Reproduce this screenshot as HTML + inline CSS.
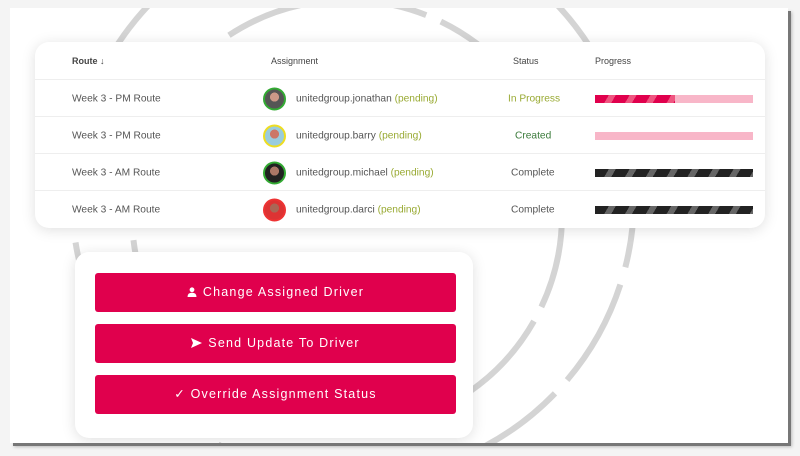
<!DOCTYPE html>
<html><head><style>
body{margin:0;width:800px;height:456px;background:#f4f4f4;position:relative;overflow:hidden;font-family:"Liberation Sans",sans-serif}
.frame{position:absolute;left:10px;top:8px;width:778px;height:435px;background:#fff;box-shadow:3px 3px 0 #777,4px 4px 3px #bbb;overflow:hidden}
svg.bg{position:absolute;left:0;top:0}
.card{position:absolute;background:#fff;border-radius:14px;box-shadow:0 2px 14px rgba(0,0,0,.13)}
.t{left:25px;top:34px;width:730px;height:186px}
.row{position:absolute;left:0;width:730px;height:37px;border-top:1px solid #eee;font-size:10.2px;color:#555}
.row>*{position:absolute;top:50%;transform:translateY(-50%)}
.hd{font-size:9px;color:#444;border:none}
.av{width:19px;height:19px;border-radius:50%;border:2px solid #3a3;left:228px;background:radial-gradient(circle at 50% 40%,#c98 0 30%,#555 31%)}
.bar{left:560px;width:158px;height:8px;background:#f8b6c8}
.pg{color:#9a3;}
.b{position:absolute;left:20px;width:361px;height:39px;background:#e0004d;border-radius:3px;color:#fff;font-size:12.5px;letter-spacing:1.2px;text-align:center;line-height:39px}
</style></head><body>
<div class="frame">
<svg class="bg" width="778" height="435">
<circle cx="337" cy="207" r="215" fill="none" stroke="#d4d4d4" stroke-width="6" stroke-dasharray="95 16"/>
<circle cx="343" cy="190" r="281" fill="none" stroke="#d4d4d4" stroke-width="6" stroke-dasharray="110 18" stroke-dashoffset="40"/>
</svg>
<div class="card t">
<div class="row hd" style="top:0;height:37px"><b style="left:37px">Route ↓</b><span style="left:236px">Assignment</span><span style="left:478px">Status</span><span style="left:560px">Progress</span></div>
<div class="row" style="top:37px"><span style="left:37px">Week 3 - PM Route</span><div class="av"></div><span style="left:261px">unitedgroup.jonathan <span class="pg">(pending)</span></span><span style="left:473px;color:#9a3">In Progress</span><div class="bar"><div style="width:80px;height:8px;background:repeating-linear-gradient(120deg,#e0004d 0 12px,#ef5580 12px 18px)"></div></div></div>
<div class="row" style="top:74px"><span style="left:37px">Week 3 - PM Route</span><div class="av" style="border-color:#ed2;background:radial-gradient(circle at 50% 40%,#c76 0 30%,#9cd 31%)"></div><span style="left:261px">unitedgroup.barry <span class="pg">(pending)</span></span><span style="left:480px;color:#3a7a3a">Created</span><div class="bar"></div></div>
<div class="row" style="top:111px"><span style="left:37px">Week 3 - AM Route</span><div class="av" style="background:radial-gradient(circle at 50% 40%,#a76 0 30%,#222 31%)"></div><span style="left:261px">unitedgroup.michael <span class="pg">(pending)</span></span><span style="left:476px">Complete</span><div class="bar" style="background:repeating-linear-gradient(120deg,#222 0 12px,#666 12px 18px)"></div></div>
<div class="row" style="top:148px"><span style="left:37px">Week 3 - AM Route</span><div class="av" style="border-color:#e33;background:radial-gradient(circle at 50% 40%,#a65 0 30%,#d33 31%)"></div><span style="left:261px">unitedgroup.darci <span class="pg">(pending)</span></span><span style="left:476px">Complete</span><div class="bar" style="background:repeating-linear-gradient(120deg,#222 0 12px,#666 12px 18px)"></div></div>
</div>
<div class="card" style="left:65px;top:244px;width:398px;height:186px">
<div class="b" style="top:21px"><svg width="10" height="10" viewBox="0 0 10 10" style="vertical-align:-1px;margin-right:6px"><circle cx="5" cy="2.8" r="2.4" fill="#fff"/><path d="M0.5 10 Q0.5 5.8 5 5.8 Q9.5 5.8 9.5 10Z" fill="#fff"/></svg>Change Assigned Driver</div>
<div class="b" style="top:72px"><svg width="11" height="10" viewBox="0 0 11 10" style="vertical-align:-1px;margin-right:6px"><path d="M0 0 L11 5 L0 10 L2 5Z" fill="#fff"/></svg>Send Update To Driver</div>
<div class="b" style="top:123px">✓ Override Assignment Status</div>
</div>
</div>
</body></html>
